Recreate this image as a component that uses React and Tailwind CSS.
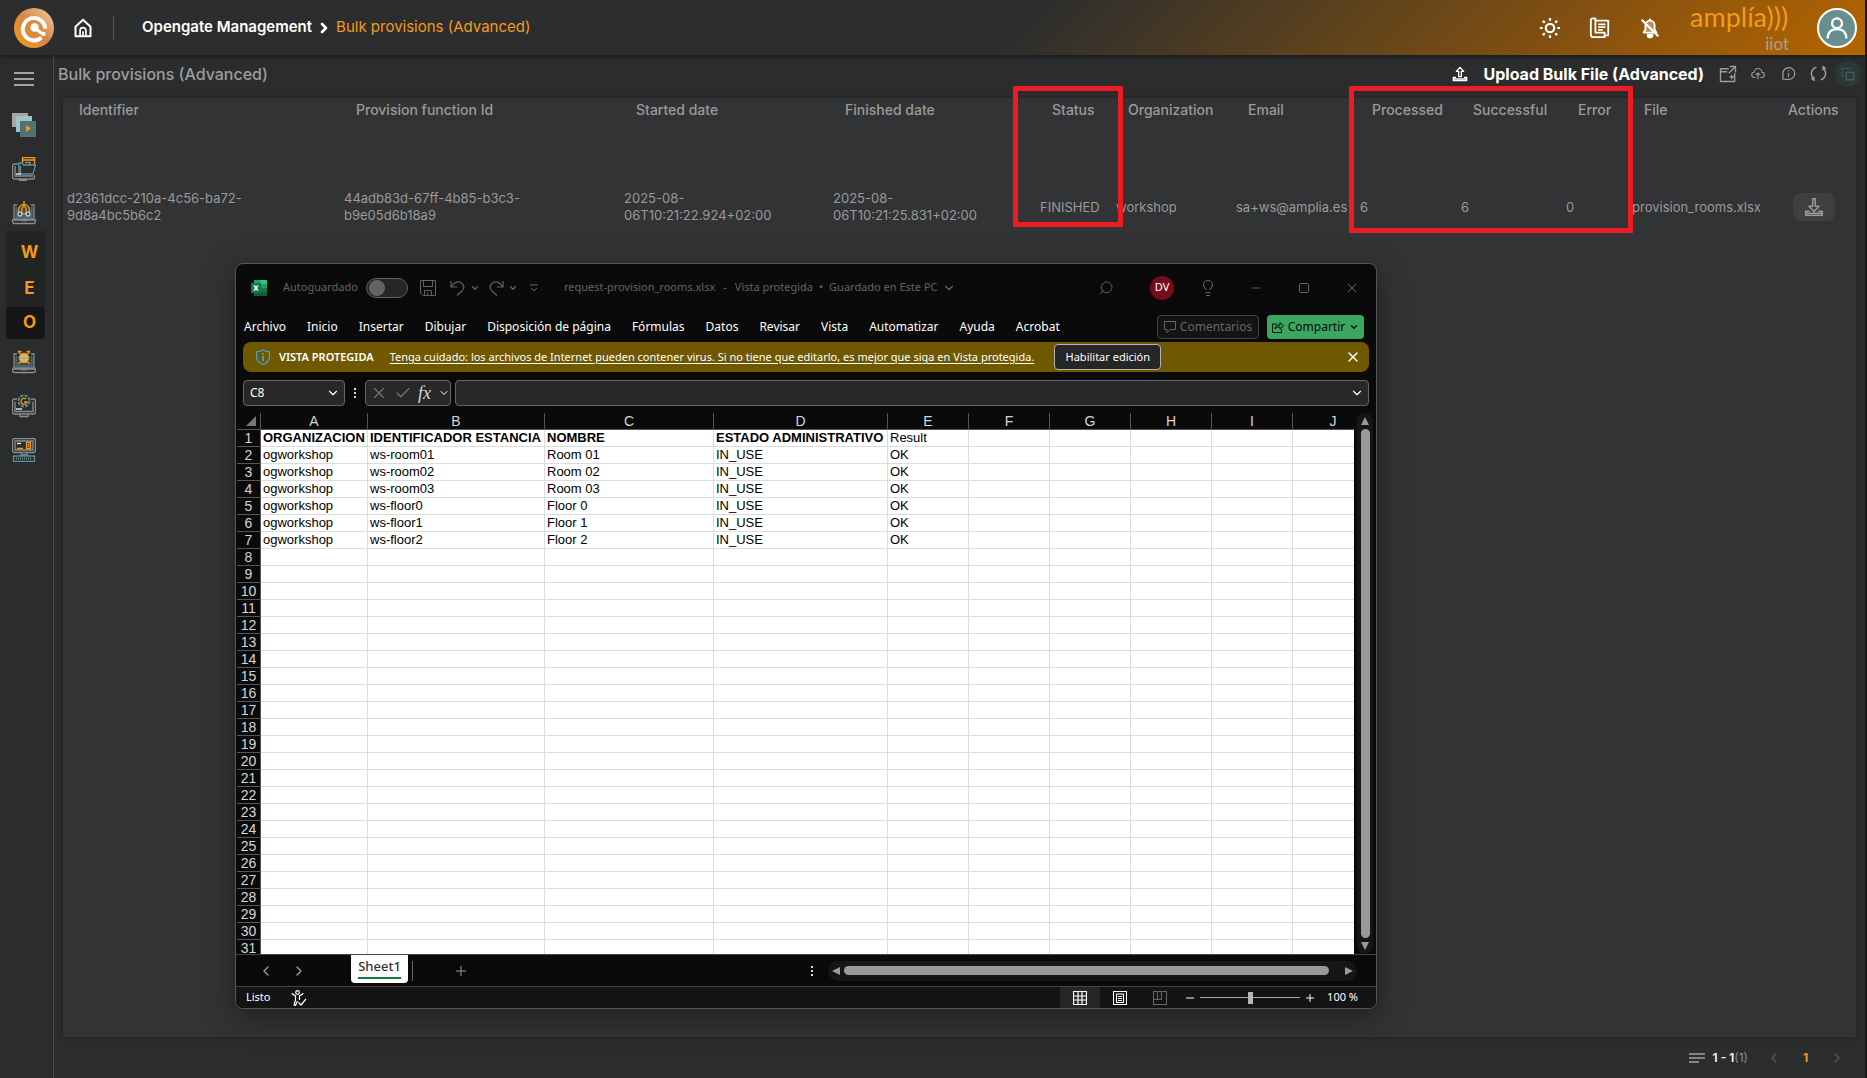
import React, { useState } from "react";
import {
  ChevronDown,
  ChevronLeft,
  ChevronRight,
  Lightbulb,
  Minus,
  Plus,
  Search,
  Square,
  X,
  Check,
} from "lucide-react";

const MENU = [
  "Archivo",
  "Inicio",
  "Insertar",
  "Dibujar",
  "Disposición de página",
  "Fórmulas",
  "Datos",
  "Revisar",
  "Vista",
  "Automatizar",
  "Ayuda",
  "Acrobat",
];

const SHEET_COLUMNS = ["A", "B", "C", "D", "E", "F", "G", "H", "I", "J"];

const SHEET_ROWS = [
  ["ORGANIZACION", "IDENTIFICADOR ESTANCIA", "NOMBRE", "ESTADO ADMINISTRATIVO", "Result"],
  ["ogworkshop", "ws-room01", "Room 01", "IN_USE", "OK"],
  ["ogworkshop", "ws-room02", "Room 02", "IN_USE", "OK"],
  ["ogworkshop", "ws-room03", "Room 03", "IN_USE", "OK"],
  ["ogworkshop", "ws-floor0", "Floor 0", "IN_USE", "OK"],
  ["ogworkshop", "ws-floor1", "Floor 1", "IN_USE", "OK"],
  ["ogworkshop", "ws-floor2", "Floor 2", "IN_USE", "OK"],
];

const TABLE_HEADERS = [
  "Identifier",
  "Provision function Id",
  "Started date",
  "Finished date",
  "Status",
  "Organization",
  "Email",
  "Processed",
  "Successful",
  "Error",
  "File",
  "Actions",
];

/* ---------- Icons ---------- */

const Svg = ({ size = 16, box = 24, className = "", children }) => (
  <svg
    width={size}
    height={size}
    viewBox={`0 0 ${box} ${box}`}
    fill="none"
    stroke="currentColor"
    strokeWidth="2"
    strokeLinejoin="round"
    className={`shrink-0 ${className}`}
    aria-hidden="true"
  >
    {children}
  </svg>
);

const LogoIcon = () => (
  <svg width="40" height="48" viewBox="0 0 40 48" className="shrink-0" aria-hidden="true">
    <defs>
      <linearGradient id="logo" x1="0" y1="1" x2="1" y2="0">
        <stop offset="0" stopColor="#f7a11b" />
        <stop offset="0.5" stopColor="#d68440" />
        <stop offset="1" stopColor="#f3cfa6" />
      </linearGradient>
    </defs>
    <circle cx="20" cy="24" r="20" fill="url(#logo)" />
    <path
      d="M27.5 33.5A11.2 11.2 0 1 1 31.2 24.5"
      fill="none"
      stroke="#fff"
      strokeWidth="4"
    />
    <circle cx="20" cy="24" r="7" fill="none" stroke="#d98a3c" strokeWidth="1.5" />
    <circle cx="20.5" cy="23.5" r="4.2" fill="#fff" />
    <path d="M22 25L28 29.5" stroke="#fff" strokeWidth="3.2" />
    <circle cx="29.5" cy="30" r="2.2" fill="#fff" />
  </svg>
);

const HomeIcon = () => (
  <Svg size={20} className="text-white">
    <path d="M3 10.5L12 2l9 8.5V22H3z" strokeWidth="2.4" />
    <path d="M8.5 22v-7a3.5 3.5 0 0 1 7 0v7M12 22v-6" />
  </Svg>
);

const SunIcon = () => (
  <Svg size={22} className="text-white">
    <circle cx="12" cy="12" r="4.6" strokeWidth="2.4" />
    <path
      d="M12 1v3M12 20v3M1 12h3M20 12h3M4.2 4.2l2.1 2.1M17.7 17.7l2.1 2.1M4.2 19.8l2.1-2.1M17.7 6.3l2.1-2.1"
      strokeWidth="2.4"
    />
  </Svg>
);

const DocIcon = () => (
  <Svg size={22} className="text-white">
    <path d="M7 17V4a2.500 2.500 0 0 0-5 0v15a3 3 0 0 0 3 3h12v-5H7zM7 4h14v13M4 1.500h3V4" />
    <path d="M10 8h8M10 11h8M10 14h5M17 20h4v-4" strokeWidth="1.8" />
  </Svg>
);

const BellOffIcon = () => (
  <Svg size={22} className="text-white">
    <path
      d="M12 4a5 5 0 0 1 5 5v5l2 3H5l2-3V9a5 5 0 0 1 5-5z"
      fill="currentColor"
      fillOpacity="0.35"
    />
    <path d="M12 2v2M9.500 19.500a2.500 2.500 0 0 0 5 0zM3 3l18 18" strokeWidth="2.4" />
  </Svg>
);

const AvatarIcon = () => (
  <Svg size={28} className="text-white">
    <circle cx="12" cy="8" r="4.2" />
    <path d="M4 21c0-5 3-8 8-8s8 3 8 8" />
  </Svg>
);

const UploadIcon = () => (
  <Svg size={16}>
    <path d="M10 16V8H6.500L12 2l5.500 6H14v8zM6 17H2v5h20v-5h-4M2 19.500h20" />
  </Svg>
);

const DownloadIcon = () => (
  <Svg size={20}>
    <path d="M10.500 2h3v9H18l-6 6.500L6 11h4.500zM7 17H2v5h20v-5h-5M2 19.500h20" strokeWidth="1.8" />
  </Svg>
);

const NewWindowIcon = () => (
  <Svg size={18}>
    <path d="M13 5H2v17h19V11M2 9h9M14 2h8v8M22 2l-9 9M14 16h6M17 13v6" strokeWidth="1.8" />
  </Svg>
);

const CloudUpIcon = () => (
  <Svg size={14}>
    <path d="M8 18H6a4.500 4.500 0 0 1-.5-9 6.500 6.500 0 0 1 13 0 4.500 4.500 0 0 1-.5 9h-2M12 21v-10M8 14l4-4 4 4" />
  </Svg>
);

const InfoBubbleIcon = () => (
  <Svg size={15}>
    <path d="M3 21v-9a9.500 9.500 0 1 1 9 9.500zM12 11v6M12 6.500v2" />
  </Svg>
);

const RefreshIcon = () => (
  <Svg size={17}>
    <path d="M9 3a9.500 9.500 0 0 0-5 15M15 21a9.500 9.500 0 0 0 5-15" />
    <path d="M1.500 19.500L6 22.500v-6zM22.500 4.500L18 1.500v6z" fill="currentColor" strokeWidth="1" />
  </Svg>
);

const SelectIcon = () => (
  <Svg size={14}>
    <path d="M9 9h13v13H9z" />
    <path d="M2 16V2h14M2 16h4M16 2v4" strokeDasharray="3 2.5" />
  </Svg>
);

const CardsIcon = () => (
  <svg width="24" height="24" viewBox="0 0 24 24" aria-hidden="true">
    <path d="M0 0h16v14H0z" fill="#a8a5a4" />
    <path d="M4 3h16v16H4z" fill="#9fc4c0" />
    <path d="M8 8h16v16H8z" fill="#4c7376" />
    <path d="M14 12l5 3.500-5 3.500z" fill="#f39a1b" />
  </svg>
);

const Laptop = () => (
  <>
    <path d="M5 4H2v14h20V4h-3" stroke="#8b8d8e" />
    <path d="M4 6v10h16V6" stroke="#4c7376" fill="#38484b" />
    <path d="M.5 19h23v1.500a2 2 0 0 1-2 2h-19a2 2 0 0 1-2-2zM9 19.500h6" stroke="#8b8d8e" />
  </>
);

const SideSvg = ({ children }) => (
  <svg width="24" height="24" viewBox="0 0 24 24" fill="none" strokeWidth="1.3" aria-hidden="true">
    {children}
  </svg>
);

const FolderSideIcon = () => (
  <SideSvg>
    <path d="M7 7H2.500a2 2 0 0 0-2 2v11a2 2 0 0 0 2 2h18a2 2 0 0 0 2-2v-2M7 23.500h8M3 9v10h18" stroke="#8b8d8e" />
    <path d="M10.500 6V.5h12V9M10.500 3h12" stroke="#f39a1b" />
    <path d="M13 5.500h5v3" stroke="#8b8d8e" />
    <path d="M7 16V6h3l1.500 2H23.500l-2.500 9H8.500V9" stroke="#5f8f90" />
    <path d="M4 17h5" stroke="#fff" />
  </SideSvg>
);

const RobotSideIcon = () => (
  <SideSvg>
    <Laptop />
    <path d="M12 0v3M6.500 12V9a5.500 5.500 0 0 1 11 0v3M10 13V7l2-2 2 2v6z" stroke="#f39a1b" />
    <circle cx="8" cy="13" r="2" stroke="#b9c6d8" />
    <circle cx="16" cy="13" r="2" stroke="#b9c6d8" />
  </SideSvg>
);

const ClockSideIcon = () => (
  <SideSvg>
    <Laptop />
    <circle cx="12" cy="8" r="4.500" stroke="#f39a1b" fill="#a6cbd0" />
    <path d="M12 3.500v9M7.500 8h9M6 1.500h3.500M18 1.500h-3.500M6 1.500l3 3M18 1.500l-3 3M6 14l3-2.500M18 14l-3-2.500" stroke="#f39a1b" />
  </SideSvg>
);

const GearSideIcon = () => (
  <SideSvg>
    <path d="M5 5H2.500a2 2 0 0 0-2 2v11a2 2 0 0 0 2 2h19a2 2 0 0 0 2-2V7a2 2 0 0 0-2-2H19M3 7.500v10h18v-10M8 20v2.500h8V20" stroke="#8b8d8e" />
    <circle cx="12" cy="7" r="5.500" stroke="#5f8f90" fill="#2b2c2e" strokeDasharray="3 1.300" strokeWidth="2" />
    <path d="M14 5a3 3 0 1 0 1 3h-3" stroke="#f39a1b" />
    <path d="M4 15h6" stroke="#fff" />
  </SideSvg>
);

const DesktopSideIcon = () => (
  <SideSvg>
    <path d="M2.500.5h19a2 2 0 0 1 2 2v10a2 2 0 0 1-2 2h-19a2 2 0 0 1-2-2v-10a2 2 0 0 1 2-2zM3 3h18v9H3zM9 15v2h6v-2" stroke="#8b8d8e" />
    <path d="M14.500 4.500h4v6h-4zM16.500 6v3M5 10.500h6" stroke="#f39a1b" />
    <path d="M5 5.500h4" stroke="#fff" />
    <path d="M1.500 18h21v5.500h-21z" stroke="#5f8f90" />
    <path d="M4 20.500h16" stroke="#5f8f90" strokeDasharray="1 1" strokeWidth="2" />
  </SideSvg>
);

const ExcelIcon = () => (
  <svg width="16" height="16" viewBox="0 0 16 16" className="shrink-0" aria-hidden="true">
    <path d="M3 0h7v8H3z" fill="#21a366" />
    <path d="M9.500 0H16v4H9.500z" fill="#33c481" />
    <path d="M9.500 4H16v4H9.500z" fill="#21a366" />
    <path d="M3 8h7v8H3z" fill="#185c37" />
    <path d="M9.500 8H16v4H9.500z" fill="#107c41" />
    <path d="M9.500 12H16v4H9.500z" fill="#185c37" />
    <path d="M0 3h10v10H0z" fill="#107c41" />
    <path d="M3 5.500l4 5M7 5.500l-4 5" stroke="#fff" strokeWidth="1.5" />
  </svg>
);

const SaveIcon = () => (
  <Svg size={16} box={16}>
    <path d="M.5.500h15v15H3L.5 13zM3.500.500v6h9v-6M4.500 15.500v-5h7v5M7.500 15.500v-3" strokeWidth="1" />
  </Svg>
);

const UndoIcon = () => (
  <Svg size={16} box={16}>
    <path d="M1 1v6h6M1.500 6.500C4 2 9 .500 12 3.500S14 9 12 11l-5 4.500" strokeWidth="1.2" />
  </Svg>
);

const RedoIcon = () => (
  <Svg size={16} box={16}>
    <path d="M15 1v6H9M14.500 6.500C12 2 7 .500 4 3.500S2 9 4 11l5 4.500" strokeWidth="1.2" />
  </Svg>
);

const ShieldIcon = () => (
  <Svg size={16} box={16} className="text-[#4aa3df]">
    <path d="M8 .700c2 1.500 4 2 6.500 2.100v5C14.500 11.500 12 14 8 15.500 4 14 1.500 11.500 1.500 7.800v-5C4 2.700 6 2.200 8 .700z" strokeWidth="1.2" />
    <path d="M8 7v5M8 4v1.600" strokeWidth="1.8" />
  </Svg>
);

const CommentIcon = () => (
  <Svg size={12} box={12}>
    <path d="M.5.500h11v8H6l-3 3v-3H.500z" strokeWidth="1" />
  </Svg>
);

const ShareIcon = () => (
  <Svg size={12} box={12}>
    <path d="M5 3H.500v8.500h9V8M3 8c0-3 2-4 5-4V1.500L11.500 5 8 8V6C6 6 4 6.500 3 8z" strokeWidth="1" />
  </Svg>
);

const AccessibilityIcon = () => (
  <Svg size={16} box={16} className="text-white">
    <circle cx="6.500" cy="2.500" r="1.800" strokeWidth="1.200" />
    <path d="M1 3c0 2 3 2 3.500 3v4L3 15l1.500.500L6.500 11M12 3c0 2-3 2-3.500 3v4M7.500 12.500l2.500 2.500 5-6" strokeWidth="1.200" />
  </Svg>
);

const Dots = () => (
  <Svg size={12} box={12} className="text-[#d6d6d6]">
    <path d="M6 1v2M6 5v2M6 9v2" />
  </Svg>
);

const ListIcon = () => (
  <Svg size={16} box={16} className="text-[#a0a0a0]">
    <path d="M0 4h16M0 8h16M0 12h10" strokeWidth="1.5" />
  </Svg>
);

const Triangle = ({ d }) => (
  <svg width="8" height="8" viewBox="0 0 8 8" className="shrink-0" aria-hidden="true">
    <path d={d} fill="#9a9a9a" />
  </svg>
);

/* ---------- Application shell ---------- */

const Header = () => (
  <header className="relative z-10 flex h-[55px] items-center bg-[linear-gradient(135deg,#2b2d2e_54%,#b56500_100%)] pr-2 pl-[14px] shadow-[0_1px_5px_rgba(0,0,0,0.5)]">
    <LogoIcon />
    <a href="#home" aria-label="Home" className="ml-[19px]">
      <HomeIcon />
    </a>
    <div className="ml-5 h-6 w-px bg-[#55585a]" />
    <nav className="ml-7 flex items-center gap-1 text-[15px]">
      <a href="#management" className="font-semibold text-white">
        Opengate Management
      </a>
      <ChevronRight className="h-4 w-4 text-white" strokeWidth={4} />
      <a href="#bulk" className="text-[#f39a1b]">
        Bulk provisions (Advanced)
      </a>
    </nav>
    <div className="ml-auto flex items-center">
      <div className="flex items-center gap-7">
        <button aria-label="Theme">
          <SunIcon />
        </button>
        <button aria-label="Documentation">
          <DocIcon />
        </button>
        <button aria-label="Notifications">
          <BellOffIcon />
        </button>
      </div>
      <div className="ml-[29px] flex w-[103px] flex-col font-[Lato]">
        <span className="text-[27px] leading-[32px] text-[#f39a1b]">amplía)))</span>
        <span className="pr-1 text-right text-[17px] leading-[21px] text-[#aaa298]">iiot</span>
      </div>
      <button
        aria-label="Account"
        className="ml-6 flex h-10 w-10 items-center justify-center rounded-full border-2 border-white bg-[#668f8d]"
      >
        <AvatarIcon />
      </button>
    </div>
  </header>
);

const Sidebar = () => (
  <nav className="flex w-[54px] shrink-0 flex-col border-r border-[#4a4c4e] pt-3 pr-1.5">
    <div className="flex flex-col items-center gap-5">
      <button aria-label="Menu" className="mb-0.5 h-6 text-[#a3a3a3]">
        <Svg size={20} box={20}>
          <path d="M0 4h20M0 10h20M0 16h20" />
        </Svg>
      </button>
      <button aria-label="Workspaces">
        <CardsIcon />
      </button>
      <button aria-label="Files">
        <FolderSideIcon />
      </button>
      <button aria-label="Devices">
        <RobotSideIcon />
      </button>
    </div>
    <div className="mt-1.5 ml-1.5 flex w-[39px] flex-col bg-[#222323] pt-1 text-[17px] font-bold text-[#f39a1b]">
      <button className="h-9 pl-2">W</button>
      <button className="h-9 pl-2">E</button>
      <button className="h-8 rounded-sm bg-[#161616] pl-2">O</button>
    </div>
    <div className="mt-[11px] flex flex-col items-center gap-5">
      <button aria-label="Alarms">
        <ClockSideIcon />
      </button>
      <button aria-label="Settings">
        <GearSideIcon />
      </button>
      <button aria-label="Systems">
        <DesktopSideIcon />
      </button>
    </div>
  </nav>
);

const Toolbar = () => (
  <div className="flex h-[43px] items-center pr-0.5 pb-1.5 pl-1 text-[#9c9c9c]">
    <h1 className="text-[16px] font-medium">Bulk provisions (Advanced)</h1>
    <button className="ml-auto flex items-center gap-4 text-[16px] font-bold text-white">
      <UploadIcon />
      Upload Bulk File (Advanced)
    </button>
    <div className="ml-[9px] flex items-center">
      <button aria-label="Open in new window" className="flex w-[30px] justify-center">
        <NewWindowIcon />
      </button>
      <button aria-label="Upload" className="flex w-[30px] justify-center">
        <CloudUpIcon />
      </button>
      <button aria-label="Information" className="flex w-[30px] justify-center">
        <InfoBubbleIcon />
      </button>
      <button aria-label="Refresh" className="flex w-[30px] justify-center">
        <RefreshIcon />
      </button>
      <button
        aria-label="Select"
        className="mx-0.5 flex h-[26px] w-[26px] items-center justify-center rounded-full bg-[#2c3836] text-[#3f6b68]"
      >
        <SelectIcon />
      </button>
    </div>
  </div>
);

const ProvisionTable = () => (
  <table className="w-full table-fixed text-left text-[13px] leading-[17px] text-[#9a9a9a]">
    <colgroup>
      <col className="w-[277px]" />
      <col className="w-[280px]" />
      <col className="w-[209px]" />
      <col className="w-[207px]" />
      <col className="w-[76px]" />
      <col className="w-[120px]" />
      <col className="w-[124px]" />
      <col className="w-[101px]" />
      <col className="w-[105px]" />
      <col className="w-[66px]" />
      <col className="w-[147px]" />
      <col className="w-[81px]" />
    </colgroup>
    <thead>
      <tr className="h-[86px] align-top">
        {TABLE_HEADERS.map((header) => (
          <th
            key={header}
            className={`pt-[3px] text-[14px] font-medium whitespace-nowrap ${
              header === "Actions" ? "pl-[13px]" : "pl-4"
            }`}
          >
            {header}
          </th>
        ))}
      </tr>
    </thead>
    <tbody>
      <tr className="h-[46px]">
        <td className="pr-20 pl-1">d2361dcc-210a-4c56-ba72-9d8a4bc5b6c2</td>
        <td className="pr-20 pl-1">44adb83d-67ff-4b85-b3c3-b9e05d6b18a9</td>
        <td className="pl-1">
          2025-08-
          <br />
          06T10:21:22.924+02:00
        </td>
        <td className="pl-1">
          2025-08-
          <br />
          06T10:21:25.831+02:00
        </td>
        <td className="pl-1">FINISHED</td>
        <td className="pl-1">workshop</td>
        <td className="pl-1 whitespace-nowrap">sa+ws@amplia.es</td>
        <td className="pl-1">6</td>
        <td className="pl-1">6</td>
        <td className="pl-1">0</td>
        <td className="pl-1">provision_rooms.xlsx</td>
        <td className="pl-[18px]">
          <button
            aria-label="Download"
            className="flex h-7 w-[42px] items-center justify-center rounded-lg bg-[#3d3f40]"
          >
            <DownloadIcon />
          </button>
        </td>
      </tr>
    </tbody>
  </table>
);

const Pagination = () => (
  <footer className="flex h-[41px] shrink-0 items-center justify-end pr-5 text-[12px]">
    <ListIcon />
    <span className="ml-2 font-semibold text-white">1 - 1</span>
    <span className="text-[#8d8d8d]">(1)</span>
    <button aria-label="Previous page" className="ml-[18px] text-[#55585a]">
      <ChevronLeft className="h-4 w-4" />
    </button>
    <button className="w-[47px] font-bold text-[#f39a1b]">1</button>
    <button aria-label="Next page" className="text-[#55585a]">
      <ChevronRight className="h-4 w-4" />
    </button>
  </footer>
);

/* ---------- Spreadsheet window ---------- */

const TitleBar = () => {
  const [autosave, setAutosave] = useState(false);

  return (
    <div className="flex h-[47px] items-center pl-[15px] text-[11px] text-[#636363]">
      <ExcelIcon />
      <label className="ml-4 flex items-center gap-2">
        Autoguardado
        <input
          type="checkbox"
          checked={autosave}
          onChange={(e) => setAutosave(e.target.checked)}
          className="flex h-5 w-[42px] appearance-none items-center rounded-full border border-[#636363] bg-[#262626] px-0.5 before:h-4 before:w-4 before:rounded-full before:bg-[#636363] checked:justify-end"
        />
      </label>
      <button aria-label="Guardar" className="ml-3">
        <SaveIcon />
      </button>
      <button aria-label="Deshacer" className="ml-3.5 flex items-center gap-1">
        <UndoIcon />
        <ChevronDown className="h-2.5 w-2.5" strokeWidth={3} />
      </button>
      <button aria-label="Rehacer" className="ml-2 flex items-center gap-1">
        <RedoIcon />
        <ChevronDown className="h-2.5 w-2.5" strokeWidth={3} />
      </button>
      <button aria-label="Personalizar" className="ml-3">
        <Svg size={8} box={8}>
          <path d="M0 1h8M1 4l3 3 3-3" strokeWidth="1" />
        </Svg>
      </button>
      <div className="ml-[26px] flex gap-2">
        <span>request-provision_rooms.xlsx</span>
        <span>-</span>
        <span>Vista protegida</span>
      </div>
      <div className="ml-1.5 flex gap-1.5">
        <span>•</span>
        <span>Guardado en Este PC</span>
      </div>
      <ChevronDown className="ml-1 h-3.5 w-3.5" />
      <div className="ml-auto flex items-center">
        <button aria-label="Buscar">
          <Search className="h-4 w-4 -scale-x-100" strokeWidth={1.5} />
        </button>
        <button className="mr-2.5 ml-9 h-6 w-6 rounded-full bg-[#750b1c] text-white">DV</button>
        <button aria-label="Ideas" className="flex w-12 justify-center">
          <Lightbulb className="h-[18px] w-[18px]" strokeWidth={1.5} />
        </button>
        <button aria-label="Minimizar" className="flex w-12 justify-center">
          <Minus className="h-3.5 w-3.5" strokeWidth={1.5} />
        </button>
        <button aria-label="Maximizar" className="flex w-12 justify-center">
          <Square className="h-3 w-3" />
        </button>
        <button aria-label="Cerrar" className="flex w-12 justify-center">
          <X className="h-4 w-4" strokeWidth={1.5} />
        </button>
      </div>
    </div>
  );
};

const MenuBar = () => (
  <div className="flex h-[31px] items-center pr-3 pl-2 text-[12px] text-white">
    <div className="flex items-center gap-[21px]">
      {MENU.map((item) => (
        <button key={item}>{item}</button>
      ))}
    </div>
    <button className="ml-auto flex h-6 w-[102px] items-center justify-center gap-1 rounded border border-[#444] bg-[#141414] text-[#666]">
      <CommentIcon />
      Comentarios
    </button>
    <button className="ml-2 flex h-6 w-[97px] items-center justify-center gap-1 rounded bg-[#3aa660] text-[#0a0a0a]">
      <ShareIcon />
      Compartir
      <ChevronDown className="h-2.5 w-2.5" strokeWidth={3} />
    </button>
  </div>
);

const ProtectedBar = () => (
  <div className="mx-[7px] flex h-[30px] items-center rounded-lg bg-[#6f5800] pl-3 text-[11px] text-white">
    <ShieldIcon />
    <strong className="ml-2 font-semibold">VISTA PROTEGIDA</strong>
    <a href="#protegida" className="ml-4 underline underline-offset-2">
      Tenga cuidado: los archivos de Internet pueden contener virus. Si no tiene que editarlo, es mejor que siga en
      Vista protegida.
    </a>
    <button className="ml-5 h-[26px] w-[107px] rounded border border-[#b5b5b5] bg-[#262626]">Habilitar edición</button>
    <button aria-label="Cerrar aviso" className="mr-2 ml-auto">
      <X className="h-4 w-4" />
    </button>
  </div>
);

const FormulaBar = () => (
  <div className="mx-[7px] mt-2 flex h-[26px] text-[12px] text-white">
    <div className="flex w-[102px] items-center rounded border border-[#666] bg-[#282828] pr-1">
      <input
        aria-label="Cuadro de nombres"
        defaultValue="C8"
        className="w-full min-w-0 bg-transparent pl-1.5 outline-none"
      />
      <ChevronDown className="h-3.5 w-3.5 shrink-0" />
    </div>
    <div className="flex w-5 items-center justify-center">
      <Dots />
    </div>
    <div className="flex w-[86px] items-center rounded border border-[#666] bg-[#282828] pl-1">
      <button aria-label="Cancelar" className="text-[#777]">
        <X className="h-[18px] w-[18px]" strokeWidth={1.5} />
      </button>
      <button aria-label="Introducir" className="ml-1.5 text-[#777]">
        <Check className="h-[18px] w-[18px]" strokeWidth={1.5} />
      </button>
      <button className="ml-1.5 font-['Liberation_Serif'] text-[18px] leading-5 text-[#d6d6d6] italic">fx</button>
      <ChevronDown className="ml-auto h-3 w-3 shrink-0" />
    </div>
    <div className="ml-1 flex flex-1 items-center rounded border border-[#666] bg-[#282828] pr-1">
      <input aria-label="Barra de fórmulas" className="w-full bg-transparent px-2 outline-none" />
      <ChevronDown className="h-3.5 w-3.5 shrink-0" />
    </div>
  </div>
);

const Sheet = () => (
  <div className="mt-[7px] flex h-[541px] font-['Liberation_Sans',sans-serif] text-[13px]">
    <div className="ml-px flex-1 overflow-hidden">
      <table className="w-[1137px] table-fixed border-separate border-spacing-0 leading-4">
        <colgroup>
          <col className="w-[24px]" />
          <col className="w-[107px]" />
          <col className="w-[177px]" />
          <col className="w-[169px]" />
          <col className="w-[174px]" />
          <col className="w-[81px]" />
          <col className="w-[81px]" />
          <col className="w-[81px]" />
          <col className="w-[81px]" />
          <col className="w-[81px]" />
          <col className="w-[81px]" />
        </colgroup>
        <thead>
          <tr className="h-[17px] text-[14px] text-[#d6d6d6]">
            <th className="border-r border-b border-[#555] p-0">
              <svg width="10" height="10" viewBox="0 0 10 10" className="mr-1 ml-auto" aria-hidden="true">
                <path d="M10 0v10H0z" fill="#777" />
              </svg>
            </th>
            {SHEET_COLUMNS.map((column) => (
              <th key={column} className="border-r border-b border-[#555] p-0 font-normal">
                {column}
              </th>
            ))}
          </tr>
        </thead>
        <tbody>
          {Array.from({ length: 31 }, (_, row) => (
            <tr key={row} className="h-[17px] bg-white text-black">
              <th className="border-r border-b border-[#555] bg-[#0a0a0a] p-0 text-[14px] font-normal text-[#d6d6d6]">
                {row + 1}
              </th>
              {SHEET_COLUMNS.map((column, i) => (
                <td
                  key={column}
                  className={`border-r border-b border-[#dcdcdc] px-0.5 py-0 whitespace-nowrap ${
                    row === 0 && i < 4 ? "font-bold" : ""
                  }`}
                >
                  {SHEET_ROWS[row]?.[i]}
                </td>
              ))}
            </tr>
          ))}
        </tbody>
      </table>
    </div>
    <div className="mr-[3px] ml-[3px] flex w-4 flex-col items-center gap-1 rounded-full bg-[#161616] py-1">
      <Triangle d="M4 0l4 8H0z" />
      <div className="w-[9px] flex-1 rounded-full bg-[#9a9a9a]" />
      <Triangle d="M0 0h8L4 8z" />
    </div>
  </div>
);

const SheetTabs = () => (
  <div className="flex h-8 items-center border-t border-[#444] text-[#9a9a9a]">
    <button aria-label="Hoja anterior" className="ml-[22px]">
      <ChevronLeft className="h-4 w-4" />
    </button>
    <button aria-label="Hoja siguiente" className="ml-[17px]">
      <ChevronRight className="h-4 w-4" />
    </button>
    <button className="ml-11 flex h-7 w-[57px] justify-center self-start rounded-b bg-white text-[13px] font-medium text-[#333]">
      <span className="h-6 border-b-2 border-[#107c41] leading-[22px]">Sheet1</span>
    </button>
    <div className="ml-1 h-5 w-px bg-[#666]" />
    <button aria-label="Hoja nueva" className="ml-10">
      <Plus className="h-4 w-4" strokeWidth={1.5} />
    </button>
    <div className="ml-auto">
      <Dots />
    </div>
    <div className="mr-[19px] ml-2.5 flex h-5 w-[529px] items-center gap-1 rounded-full bg-[#161616] px-1">
      <Triangle d="M8 0v8L0 4z" />
      <div className="h-[9px] flex-1 rounded-full bg-[#9a9a9a]" />
      <div className="w-2" />
      <Triangle d="M0 0l8 4-8 4z" />
    </div>
  </div>
);

const StatusBar = () => {
  const [zoom, setZoom] = useState(100);

  return (
    <div className="flex h-[22px] items-center border-t border-[#444] bg-[#141414] pr-[18px] pl-2.5 text-[11px] text-white">
      <span>Listo</span>
      <button aria-label="Accesibilidad" className="ml-5">
        <AccessibilityIcon />
      </button>
      <div className="ml-auto flex h-full items-center">
        <button aria-label="Vista normal" className="flex h-full w-10 items-center justify-center bg-[#262626]">
          <Svg size={14} box={14}>
            <path d="M.5.500h13v13H.500zM5 0v14M9 0v14M0 5h14M0 9h14" strokeWidth="1.2" />
          </Svg>
        </button>
        <button aria-label="Diseño de página" className="flex h-full w-10 items-center justify-center">
          <Svg size={14} box={14}>
            <path d="M.5.500h13v13H.500zM3.500 3h7v8.500h-7zM5 5.500h4M5 7.500h4M5 9.500h4" strokeWidth="1.1" />
          </Svg>
        </button>
        <button aria-label="Saltos de página" className="flex h-full w-10 items-center justify-center text-[#666]">
          <Svg size={14} box={14}>
            <path d="M.5.500h13v13H.500zM4.500.500v8M8.500.500v8H.500" strokeWidth="1.1" />
          </Svg>
        </button>
        <button aria-label="Alejar" className="ml-1">
          <Minus className="h-3 w-3" />
        </button>
        <input
          type="range"
          min="10"
          max="190"
          value={zoom}
          onChange={(e) => setZoom(Number(e.target.value))}
          aria-label="Zoom"
          className="mx-1 h-3 w-[100px] appearance-none bg-[linear-gradient(#aaa,#aaa)] bg-[length:100%_1px] bg-center bg-no-repeat [&::-webkit-slider-thumb]:h-3 [&::-webkit-slider-thumb]:w-[5px] [&::-webkit-slider-thumb]:appearance-none [&::-webkit-slider-thumb]:bg-[#b5b5b5]"
        />
        <button aria-label="Acercar">
          <Plus className="h-3 w-3" />
        </button>
        <span className="ml-2.5 w-[32px] text-right whitespace-nowrap">{zoom} %</span>
      </div>
    </div>
  );
};

const SpreadsheetWindow = () => (
  <section className="absolute top-[165px] left-[172px] w-[1142px] overflow-hidden rounded-lg border border-[#555] bg-[#0a0a0a] font-['Noto_Sans',sans-serif] shadow-[0_8px_30px_rgba(0,0,0,0.4)]">
    <TitleBar />
    <MenuBar />
    <ProtectedBar />
    <FormulaBar />
    <Sheet />
    <SheetTabs />
    <StatusBar />
  </section>
);

const App = () => (
  <div className="flex min-h-screen flex-col border-r-2 border-[#1b1b1b] bg-[#2b2c2e] font-[Inter,sans-serif]">
    <Header />
    <div className="flex flex-1">
      <Sidebar />
      <main className="flex min-w-0 flex-1 flex-col">
        <Toolbar />
        <div className="relative mx-[9px] min-h-[930px] flex-1 bg-[#323334] shadow-[0_0_5px_rgba(0,0,0,0.25)]">
          <ProvisionTable />
          {/* Highlighted columns */}
          <div className="pointer-events-none absolute -top-3 left-[950px] h-[141px] w-[110px] border-[5px] border-[#ed1c24]" />
          <div className="pointer-events-none absolute -top-3 left-[1286px] h-[147px] w-[284px] border-[5px] border-[#ed1c24]" />
          <SpreadsheetWindow />
        </div>
        <Pagination />
      </main>
    </div>
  </div>
);

export default App;
